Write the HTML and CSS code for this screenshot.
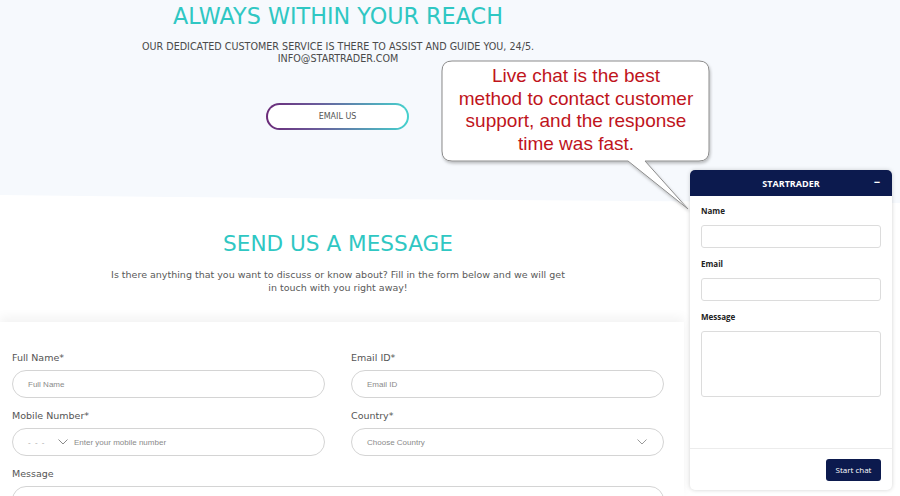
FILE: index.html
```html
<!DOCTYPE html>
<html>
<head>
<meta charset="utf-8">
<link rel="stylesheet" href="styles.css">
</head>
<body>
<div class="page">
  <section class="hero">
    <h1 class="title">ALWAYS WITHIN YOUR REACH</h1>
    <p class="hero-text">OUR DEDICATED CUSTOMER SERVICE IS THERE TO ASSIST AND GUIDE YOU, 24/5.<br>INFO@STARTRADER.COM</p>
    <a class="email-btn">EMAIL US</a>
  </section>
  <svg class="wave" viewBox="0 0 900 8" preserveAspectRatio="none"><path d="M0 0 H900 V8 Q450 5 0 0 Z" fill="#f6f9fd"/></svg>
  <section class="intro">
    <h2 class="title title-sm">SEND US A MESSAGE</h2>
    <p class="intro-text">Is there anything that you want to discuss or know about? Fill in the form below and we will get<br>in touch with you right away!</p>
  </section>
  <section class="form-card">
    <div class="form-grid">
      <div class="field">
        <label class="lbl">Full Name*</label>
        <div class="pill"><span class="ph">Full Name</span></div>
      </div>
      <div class="field">
        <label class="lbl">Email ID*</label>
        <div class="pill"><span class="ph">Email ID</span></div>
      </div>
      <div class="field">
        <label class="lbl">Mobile Number*</label>
        <div class="pill">
          <span class="ph dashes">- - -</span>
          <svg class="chev chev-code" viewBox="0 0 10 6"><polyline points="0.5,0.5 5,5 9.5,0.5" fill="none" stroke="#8a8a8a" stroke-width="1"/></svg>
          <span class="ph">Enter your mobile number</span>
        </div>
      </div>
      <div class="field">
        <label class="lbl">Country*</label>
        <div class="pill pill-select">
          <span class="ph">Choose Country</span>
          <svg class="chev" viewBox="0 0 10 6"><polyline points="0.5,0.5 5,5 9.5,0.5" fill="none" stroke="#9a9a9a" stroke-width="1"/></svg>
        </div>
      </div>
      <div class="field field-wide">
        <label class="lbl">Message</label>
        <div class="textarea"></div>
      </div>
    </div>
  </section>
</div>

<div class="bubble">
  <svg class="bubble-shape" viewBox="0 0 272 154" width="272" height="154">
    <defs>
      <filter id="sh" x="-10%" y="-10%" width="120%" height="130%">
        <feDropShadow dx="1" dy="2" stdDeviation="1.5" flood-color="#000" flood-opacity="0.25"/>
      </filter>
    </defs>
    <path d="M11 1 H258 Q268 1 268 11 V91 Q268 101 258 101 H204 L247 149 L187 101 H11 Q1 101 1 91 V11 Q1 1 11 1 Z" fill="#fff" stroke="#8c8c8c" stroke-width="1" filter="url(#sh)"/>
  </svg>
  <p class="bubble-text">Live chat is the best<br>method to contact customer<br>support, and the response<br>time was fast.</p>
</div>

<aside class="chat">
  <header class="chat-head">
    <span class="chat-title">STARTRADER</span>
    <span class="chat-min">−</span>
  </header>
  <div class="chat-body">
    <label class="chat-lbl">Name</label>
    <div class="chat-input"></div>
    <label class="chat-lbl">Email</label>
    <div class="chat-input"></div>
    <label class="chat-lbl">Message</label>
    <div class="chat-input chat-area"></div>
  </div>
  <footer class="chat-foot">
    <button class="chat-btn">Start chat</button>
  </footer>
</aside>
</body>
</html>
```

FILE: styles.css
```css
* { box-sizing: border-box; }
html, body { margin: 0; padding: 0; }
body {
  width: 900px;
  height: 496px;
  overflow: hidden;
  background: #fff;
  font-family: "DejaVu Sans", "Open Sans", sans-serif;
  position: relative;
}
.page { width: 900px; height: 496px; overflow: hidden; }

.hero {
  background: #f6f9fd;
  height: 195px;
  width: 900px;
  padding-top: 4px;
}
.hero > * { width: 676px; }
.title {
  margin: 0;
  text-align: center;
  color: #2fc7c3;
  font-weight: 400;
  font-size: 22.3px;
  line-height: 24px;
  letter-spacing: 0;
}
.hero-text {
  margin: 13px 0 0;
  text-align: center;
  color: #4a4a4a;
  font-size: 9.6px;
  line-height: 12px;
}
.email-btn {
  display: block;
  width: 143px;
  height: 27px;
  margin: 38px 0 0 266px;
  border-radius: 14px;
  border: 2px solid transparent;
  background: linear-gradient(#fff, #fff) padding-box, linear-gradient(90deg, #6a2a78 0%, #6a5a9a 35%, #45d2ce 100%) border-box;
  color: #555;
  font-size: 8px;
  line-height: 23px;
  text-align: center;
}
.wave { display: block; width: 900px; height: 8px; }

.intro { width: 676px; padding-top: 29px; height: 119px; }
.title-sm { font-size: 21.6px; line-height: 24px; }
.intro-text {
  margin: 12px 0 0;
  text-align: center;
  color: #5a5a5a;
  font-size: 9.5px;
  line-height: 13px;
}

.form-card {
  width: 684px;
  height: 174px;
  background: #fff;
  box-shadow: 0 -5px 10px rgba(0,0,0,0.05);
  padding: 29px 20px 0 12px;
}
.form-grid {
  display: grid;
  grid-template-columns: 313px 313px;
  column-gap: 26px;
  row-gap: 11px;
}
.field { display: flex; flex-direction: column; gap: 6px; }
.field-wide { grid-column: 1 / span 2; }
.lbl {
  color: #555;
  font-size: 9.5px;
  line-height: 13px;
  height: 13px;
  margin-top: 0;
  margin-bottom: 0;
}
.pill {
  height: 28px;
  border: 1px solid #d4d4d4;
  border-radius: 14px;
  display: flex;
  align-items: center;
  padding: 0 15px;
  gap: 8px;
}
.ph {
  font-family: "Liberation Sans", Arial, sans-serif;
  font-size: 8px;
  color: #8a8a8a;
}
.dashes { color: #aaa; letter-spacing: 1px; width: 22px; }
.chev { width: 10px; height: 6px; flex: none; }
.chev-code { margin-right: -2px; }
.pill-select { justify-content: space-between; padding-right: 16px; }
.textarea {
  height: 40px;
  border: 1px solid #d4d4d4;
  border-radius: 14px;
}

.bubble {
  position: absolute;
  left: 441px;
  top: 60px;
  width: 272px;
  height: 154px;
}
.bubble-shape { position: absolute; left: 0; top: 0; }
.bubble-text {
  position: relative;
  margin: 0;
  width: 270px;
  padding-top: 5px;
  text-align: center;
  font-family: "Liberation Sans", Arial, sans-serif;
  font-size: 19px;
  line-height: 22.7px;
  color: #c0141c;
}

.chat {
  position: absolute;
  left: 690px;
  top: 170px;
  width: 202px;
  height: 320px;
  background: #fff;
  border-radius: 5px;
  box-shadow: 0 0 4px rgba(0,0,0,0.18);
  display: flex;
  flex-direction: column;
  font-family: "Open Sans", "Noto Sans", sans-serif;
  overflow: hidden;
}
.chat-head {
  height: 26px;
  background: #0c1a4e;
  color: #fff;
  display: flex;
  align-items: center;
  justify-content: center;
  position: relative;
}
.chat-title { font-weight: 700; font-size: 9px; }
.chat-min { position: absolute; right: 12px; top: 5px; font-weight: 700; font-size: 11px; line-height: 14px; }
.chat-body {
  flex: 1;
  padding: 9px 11px 0 11px;
  display: flex;
  flex-direction: column;
}
.chat-lbl {
  font-weight: 700;
  font-size: 8px;
  line-height: 12px;
  color: #222;
  margin-bottom: 8px;
}
.chat-input {
  height: 23px;
  border: 1px solid #dcdcdc;
  border-radius: 3px;
  margin-bottom: 10px;
}
.chat-area { height: 66px; }
.chat-foot {
  height: 42px;
  border-top: 1px solid #ececec;
  display: flex;
  justify-content: flex-end;
  align-items: center;
  padding-right: 11px;
}
.chat-btn {
  width: 55px;
  height: 22px;
  border: 0;
  border-radius: 3px;
  background: #0c1a4e;
  color: #fff;
  font-family: "Open Sans", "Noto Sans", sans-serif;
  font-size: 8px;
  padding: 0;
}
```
